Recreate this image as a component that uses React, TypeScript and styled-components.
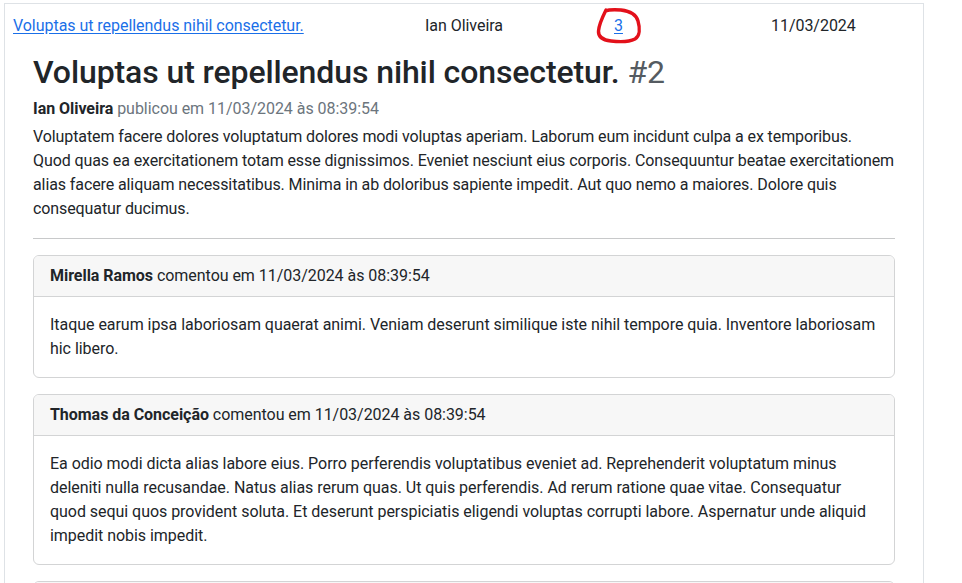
import React from "react";
import styled, { createGlobalStyle } from "styled-components";

const GlobalStyle = createGlobalStyle`
  html, body { margin: 0; padding: 0; background: #fff; }
  body {
    font-family: Roboto, "Liberation Sans", Arial, sans-serif;
    font-size: 16px;
    line-height: 24px;
    color: #212529;
    letter-spacing: -0.04px;
  }
  * { box-sizing: border-box; }
`;

const Table = styled.div`
  margin: 3px 0 0 4px;
  width: 920px;
  border: 1px solid #dee2e6;
  border-bottom: none;
`;

const SummaryRow = styled.div`
  display: grid;
  grid-template-columns: 412px 189px 157px 1fr;
  padding: 10px 8px 8px 8px;
`;

const Cell = styled.div`
  position: relative;
  white-space: nowrap;
`;

const Link = styled.a`
  color: #1a6fe8;
  text-decoration: underline;
  text-underline-offset: 2px;
  cursor: pointer;
`;

const Marker = styled.svg`
  position: absolute;
  left: -17px;
  top: -8px;
  width: 46px;
  height: 40px;
  overflow: visible;
  pointer-events: none;
`;

const Detail = styled.div`
  padding: 7px 28px 0 28px;
`;

const Title = styled.h2`
  margin: 0 0 6px;
  font-size: 32px;
  line-height: 38px;
  font-weight: 500;
  letter-spacing: -0.1px;
`;

const Number = styled.span`
  color: #555b61;
  font-weight: 400;
`;

const Meta = styled.div`
  margin-bottom: 4px;
  color: #6c757d;
`;

const Author = styled.strong`
  color: #212529;
  font-weight: 700;
`;

const Body = styled.p`
  margin: 0 0 17px;
  letter-spacing: -0.1px;
`;

const Divider = styled.hr`
  margin: 17px 0 16px;
  border: 0;
  border-top: 1px solid #c8c9ca;
`;

const Card = styled.div`
  border: 1px solid #d3d4d5;
  border-radius: 6px;
  margin-bottom: 16px;
  overflow: hidden;
`;

const CardHeader = styled.div`
  background: #f7f7f7;
  padding: 8px 16px;
  border-bottom: 1px solid #d3d4d5;
`;

const CardBody = styled.div`
  padding: 16px;
`;

const comments = [
  {
    name: "Mirella Ramos",
    text: "Itaque earum ipsa laboriosam quaerat animi. Veniam deserunt similique iste nihil tempore quia. Inventore laboriosam hic libero.",
  },
  {
    name: "Thomas da Conceição",
    text: "Ea odio modi dicta alias labore eius. Porro perferendis voluptatibus eveniet ad. Reprehenderit voluptatum minus deleniti nulla recusandae. Natus alias rerum quas. Ut quis perferendis. Ad rerum ratione quae vitae. Consequatur quod sequi quos provident soluta. Et deserunt perspiciatis eligendi voluptas corrupti labore. Aspernatur unde aliquid impedit nobis impedit.",
  },
  {
    name: "Ian Oliveira",
    text: "Dolorem ipsa voluptas sed aut. Quia cumque perspiciatis ut accusamus nisi.",
  },
];

export default function App() {
  return (
    <>
      <GlobalStyle />
      <Table>
        <SummaryRow>
          <Cell>
            <Link>Voluptas ut repellendus nihil consectetur.</Link>
          </Cell>
          <Cell>Ian Oliveira</Cell>
          <Cell>
            <Link>3</Link>
            <Marker viewBox="0 0 46 40">
              <path
                d="M9 4 C 6 10, 2 18, 1.5 25 C 1 31, 6 34, 14 35 C 22 36, 32 36, 38 33 C 43 30, 43 22, 41 15 C 39 8, 33 5, 24 4 C 18 3.5, 12 3.5, 8.5 5"
                fill="none"
                stroke="#e3101a"
                strokeWidth="3.4"
                strokeLinecap="round"
                strokeLinejoin="round"
              />
            </Marker>
          </Cell>
          <Cell>11/03/2024</Cell>
        </SummaryRow>
        <Detail>
          <Title>
            Voluptas ut repellendus nihil consectetur. <Number>#2</Number>
          </Title>
          <Meta>
            <Author>Ian Oliveira</Author> publicou em 11/03/2024 às 08:39:54
          </Meta>
          <Body>
            Voluptatem facere dolores voluptatum dolores modi voluptas aperiam. Laborum eum incidunt culpa a ex
            temporibus.
            <br />
            Quod quas ea exercitationem totam esse dignissimos. Eveniet nesciunt eius corporis. Consequuntur beatae
            exercitationem alias facere aliquam necessitatibus. Minima in ab doloribus sapiente impedit. Aut quo nemo
            a maiores. Dolore quis consequatur ducimus.
          </Body>
          <Divider />
          {comments.map((c) => (
            <Card key={c.name + c.text.length}>
              <CardHeader>
                <Author>{c.name}</Author> comentou em 11/03/2024 às 08:39:54
              </CardHeader>
              <CardBody>{c.text}</CardBody>
            </Card>
          ))}
        </Detail>
      </Table>
    </>
  );
}
